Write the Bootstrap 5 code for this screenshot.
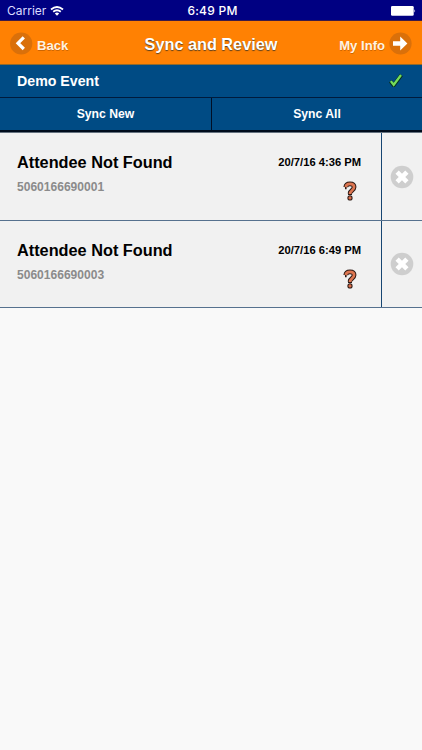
<!DOCTYPE html>
<html lang="en">
<head>
<meta charset="utf-8">
<meta name="viewport" content="width=device-width, initial-scale=1">
<title>Sync and Review</title>
<link rel="stylesheet" href="https://cdn.jsdelivr.net/npm/bootstrap@5.3.0/dist/css/bootstrap.min.css">
<style>
body{background:#f9f9f9;font-family:"Liberation Sans",Arial,sans-serif;font-weight:700;color:#000;line-height:1}
svg{display:block;flex:none}
.status-bar{display:grid;grid-template-columns:1fr auto 1fr;height:21px;background:#000082;color:#fff;font-family:Inter,sans-serif;font-weight:400;font-size:12px;padding:1px 6px 0 7px;border-bottom:1px solid #3a1a48}
.carrier{color:#dcdcff}
.clock{font-weight:500;letter-spacing:.25px;padding-left:2px}
.app-header{display:grid;grid-template-columns:1fr auto 1fr;height:44px;background:#ff8103;color:#fff;padding:2px 10px 0;border-bottom:1px solid #8f6a2c}
.app-header a{color:#fff3e2;font-size:13.1px;text-shadow:0 1px 0 rgba(110,50,0,.35)}
.app-header a span{padding-top:4px}
.app-header h1{font-size:16.25px;font-weight:700;margin:0;line-height:1;padding-top:1px;text-shadow:0 1px 1px #5a4020}
.event-bar{height:33px;background:#004b84;color:#fff;font-size:14.2px;padding:0 19px 0 17px;border-bottom:1px solid #001b3c}
.sync-row{height:34px;background:#004b84;border-bottom:2px solid #000c1c}
.sync-btn{color:#fff;font-size:12.2px;font-weight:700;padding:1px 0 0;line-height:1}
.sync-btn+.sync-btn{border-left:1px solid #000f26!important}
.entries{border-top:1px solid #65727f}
.entry{height:87px;background:#f1f1f1;border-bottom:1px solid #56718e}
.entry:first-child{height:88px}
.entry-main{border-right:1px solid #174672;padding:20px 20px 0 17px;width:382px}
.entry-name{font-size:16.3px;font-weight:700;margin:0;line-height:18px}
.entry-id{font-size:12.05px;color:#8b8b8b;line-height:14px;margin-top:9px}
.entry-date{font-size:11.2px;line-height:18px;margin-bottom:10px}
.entry-remove{width:40px}
</style>
<script src="https://cdn.jsdelivr.net/npm/bootstrap@5.3.0/dist/js/bootstrap.bundle.min.js"></script>
</head>
<body>
<svg width="0" height="0" class="position-absolute" aria-hidden="true">
<symbol id="question" viewBox="0 0 14 20"><path d="M2.8 6.2C2.9 3.7 4.5 2.8 7 2.8c2.6 0 4.1 1.2 4.1 3.3 0 3.2-4.1 3.2-4.1 6.3" fill="none" stroke="#2c1a15" stroke-width="4.7"/><circle cx="7" cy="16.9" r="2.6" fill="#2c1a15"/><path d="M2 6.2h1.6M7 11v2.9" stroke="#2c1a15" stroke-width="4"/><path d="M2.8 6.1C2.9 3.7 4.5 2.8 7 2.8c2.6 0 4.1 1.2 4.1 3.3 0 3.2-4.1 3.2-4.1 7" fill="none" stroke="#dd7651" stroke-width="2.7"/><circle cx="7" cy="16.9" r="1.6" fill="#d96e4b"/></symbol>
<symbol id="remove" viewBox="0 0 24 24"><circle cx="12" cy="12" r="11.3" fill="#cecece"/><path d="M7.1 7.1l9.8 9.8M16.9 7.1l-9.8 9.8" stroke="#fff" stroke-width="4.6"/></symbol>
</svg>
<div class="status-bar align-items-center">
<div class="d-flex align-items-center"><span class="carrier">Carrier</span>
<svg class="ms-1" width="14" height="10" viewBox="0 0 14 10" fill="none" stroke="#fff" stroke-width="1.8"><path d="M1 3.5Q7-1.5 13 3.5M3.2 5.8Q7 2.7 10.8 5.8"/><path d="M4.8 7.4L7 9.7l2.2-2.3Q7 5.8 4.8 7.4z" fill="#fff" stroke="none"/></svg></div>
<span class="clock">6:49 PM</span>
<svg class="ms-auto" width="25" height="10" viewBox="0 0 25 10" fill="#fff"><rect width="22.7" height="9.7" rx="1.3"/><path d="M23.4 3.2q1.6 1.7 0 3.4z"/></svg>
</div>
<header class="app-header align-items-center">
<a href="#" class="d-flex align-items-center text-decoration-none"><svg width="23" height="23" viewBox="0 0 23 23"><circle cx="11.2" cy="11.5" r="11.1" fill="#da700a"/><path d="M13.8 5.4L8 11.2l5.8 5.8" fill="none" stroke="#fff" stroke-width="3.2"/></svg><span class="ms-1">Back</span></a>
<h1>Sync and Review</h1>
<a href="#" class="d-flex align-items-center justify-content-end text-decoration-none"><span class="me-1">My Info</span><svg width="23" height="23" viewBox="0 0 23 23"><circle cx="11.5" cy="11.5" r="11.1" fill="#da700a"/><path d="M4 9.2h7.2V4.5l7.2 7-7.2 7v-4.7H4z" fill="#fff"/></svg></a>
</header>
<section class="event-bar d-flex align-items-center justify-content-between"><span>Demo Event</span>
<svg class="mb-1" width="14" height="15" viewBox="0 0 14 15" fill="none"><path d="M1.4 9.3l3.3 4L12.3 3" stroke="#06301f" stroke-width="3.8"/><path d="M1.8 9.1l2.9 3.7L12 3" stroke="#73dc5b" stroke-width="2.3"/></svg></section>
<div class="sync-row d-flex"><button class="sync-btn btn border-0 rounded-0 w-50">Sync New</button><button class="sync-btn btn border-0 rounded-0 w-50">Sync All</button></div>
<main class="entries">
<article class="entry d-flex"><div class="entry-main d-flex justify-content-between"><div><h2 class="entry-name">Attendee Not Found</h2><div class="entry-id">5060166690001</div></div><div class="d-flex flex-column align-items-end"><span class="entry-date">20/7/16 4:36 PM</span><svg class="me-1" width="14" height="20"><use href="#question"/></svg></div></div><div class="entry-remove d-flex align-items-center justify-content-center"><svg width="24" height="24"><use href="#remove"/></svg></div></article>
<article class="entry d-flex"><div class="entry-main d-flex justify-content-between"><div><h2 class="entry-name">Attendee Not Found</h2><div class="entry-id">5060166690003</div></div><div class="d-flex flex-column align-items-end"><span class="entry-date">20/7/16 6:49 PM</span><svg class="me-1" width="14" height="20"><use href="#question"/></svg></div></div><div class="entry-remove d-flex align-items-center justify-content-center"><svg width="24" height="24"><use href="#remove"/></svg></div></article>
</main>
</body>
</html>
